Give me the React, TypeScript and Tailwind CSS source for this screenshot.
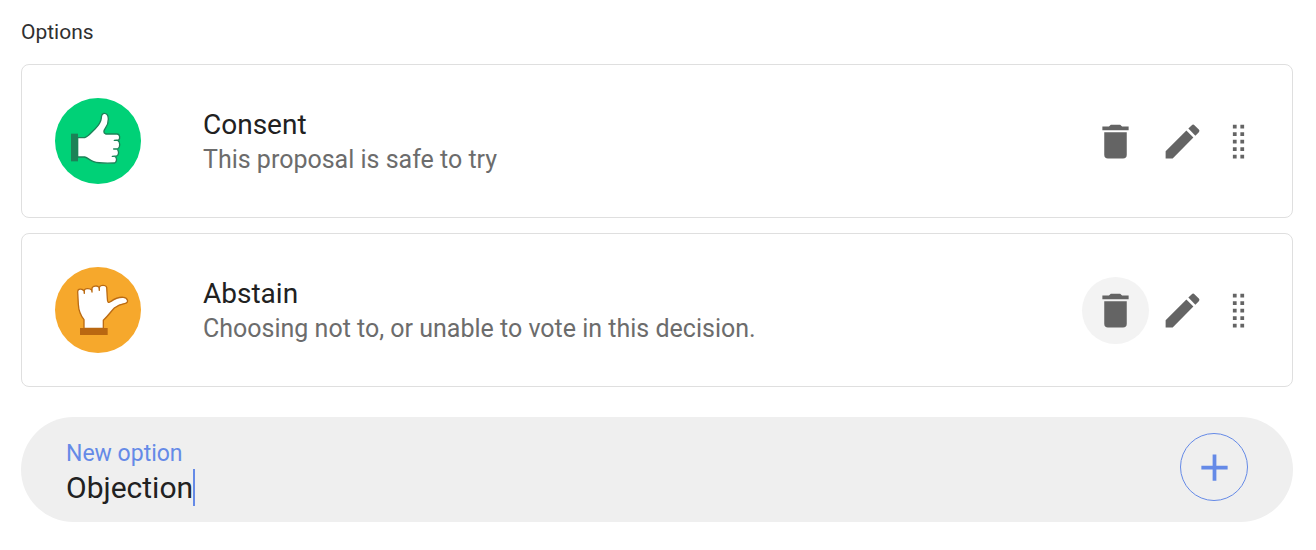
import { useState, type ReactNode } from "react";

function ThumbUp() {
  return (
    <svg viewBox="30 24 258 258" className="size-[86px] shrink-0" aria-hidden="true">
      <circle cx="159" cy="153" r="129" fill="#00d177" />
      <path
        d="M98 143H119C131 139 139 127 150 117C163 104 168 96 169 84C169 75 171 71 177 70C185 69 190 76 190 87C190 98 188 105 182 113C177 121 173 128 182 132H216C225 132 226 145 221 150L208 151H218C226 155 226 172 219 176L206 177H215C223 181 222 196 215 198L202 199H209C216 201 217 215 209 219C185 220 163 221 146 215C133 211 130 204 119 201H98Z"
        fill="#fff"
        stroke="#1b8257"
        strokeWidth="4"
        strokeLinejoin="round"
      />
      <rect x="78" y="131" width="21" height="83" fill="#1b8257" />
    </svg>
  );
}

function ThumbSideways() {
  return (
    <svg viewBox="30 27 258 258" className="size-[86px] shrink-0" aria-hidden="true">
      <circle cx="159" cy="156" r="129" fill="#f6a82c" />
      <path
        d="M117 211V185C107 173 101 159 100 139L98 101C98 94 104 92 111 94L117 98L118 106V97C119 91 134 90 140 96L141 102V91C142 83 158 82 162 88L163 97V88C165 80 183 80 185 88L187 121C187 134 190 136 198 130C211 121 222 117 235 118C249 119 252 134 241 136C229 138 219 141 208 150C197 161 191 172 175 187V211Z"
        fill="#fff"
        stroke="#bb6b12"
        strokeWidth="4"
        strokeLinejoin="round"
      />
      <rect x="105" y="210" width="83" height="21" fill="#b96711" />
    </svg>
  );
}

const paths = {
  trash:
    "M19,4H15.5L14.5,3H9.5L8.5,4H5V6H19M6,19A2,2 0 0,0 8,21H16A2,2 0 0,0 18,19V7H6V19Z",
  pencil:
    "M20.71,7.04C21.1,6.65 21.1,6 20.71,5.63L18.37,3.29C18,2.9 17.35,2.9 16.96,3.29L15.12,5.12L18.87,8.87M3,17.25V21H6.75L17.81,9.93L14.06,6.18L3,17.25Z",
  drag: "M9,3H11V5H9V3M13,3H15V5H13V3M9,7H11V9H9V7M13,7H15V9H13V7M9,11H11V13H9V11M13,11H15V13H13V11M9,15H11V17H9V15M13,15H15V17H13V15M9,19H11V21H9V19M13,19H15V21H13V19Z",
  plus: "M19,13H13V19H11V13H5V11H11V5H13V11H19V13Z",
};

function Icon({ name }: { name: keyof typeof paths }) {
  return (
    <svg viewBox="0 0 24 24" className="size-[45px] shrink-0" fill="currentColor" aria-hidden="true">
      <path d={paths[name]} />
    </svg>
  );
}

type OptionProps = {
  picture: ReactNode;
  title: string;
  meaning: string;
  active?: boolean;
};

function Option({ picture, title, meaning, active = false }: OptionProps) {
  return (
    <li className="flex items-center rounded-lg border border-[#dfdfdf] bg-white py-[33px] pr-[31px] pl-[33px]">
      {picture}
      <div className="ml-[62px] min-w-0 grow">
        <h3 className="text-[28px] leading-[37px] text-[#212121]">{title}</h3>
        <p className="text-[25px] leading-[34px] text-[#6c6c6c]">{meaning}</p>
      </div>
      <div className="flex shrink-0 items-center text-[#646464]">
        <button
          type="button"
          aria-label={`Remove ${title}`}
          className={
            active
              ? "flex size-[67px] items-center justify-center rounded-full bg-[#f3f3f3]"
              : "flex size-[67px] items-center justify-center rounded-full"
          }
        >
          <Icon name="trash" />
        </button>
        <button
          type="button"
          aria-label={`Edit ${title}`}
          className="flex size-[67px] items-center justify-center rounded-full"
        >
          <Icon name="pencil" />
        </button>
        <button type="button" aria-label={`Reorder ${title}`} className="cursor-grab">
          <Icon name="drag" />
        </button>
      </div>
    </li>
  );
}

export default function App() {
  const [name, setName] = useState("Objection");

  return (
    <main className="bg-white pt-4 pr-[23px] pb-7 pl-[21px] font-[Roboto,sans-serif]">
      <h2 className="text-[21px] leading-8 text-[#303030]">Options</h2>
      <ul className="mt-4 flex flex-col gap-[15px]">
        <Option picture={<ThumbUp />} title="Consent" meaning="This proposal is safe to try" />
        <Option
          picture={<ThumbSideways />}
          title="Abstain"
          meaning="Choosing not to, or unable to vote in this decision."
          active
        />
      </ul>
      <form
        className="mt-[30px] flex items-start justify-between rounded-full bg-[#efefef] px-[45px] py-4"
        onSubmit={(event) => event.preventDefault()}
      >
        <div className="min-w-0 pt-1.5">
          <label htmlFor="new-option" className="block text-[23px] leading-[30px] text-[#658ae7]">
            New option
          </label>
          <div className="flex items-center">
            <input
              id="new-option"
              type="text"
              value={name}
              onChange={(event) => setName(event.target.value)}
              className="field-sizing-content h-[37px] bg-transparent text-[30px] leading-9 text-[#212121] caret-transparent outline-none"
            />
            <span className="h-[37px] w-0.5 bg-[#658ae7]" aria-hidden="true" />
          </div>
        </div>
        <button
          type="submit"
          aria-label="Add option"
          className="flex size-[68px] shrink-0 items-center justify-center rounded-full border border-[#658ae7] text-[#658ae7]"
        >
          <Icon name="plus" />
        </button>
      </form>
    </main>
  );
}
